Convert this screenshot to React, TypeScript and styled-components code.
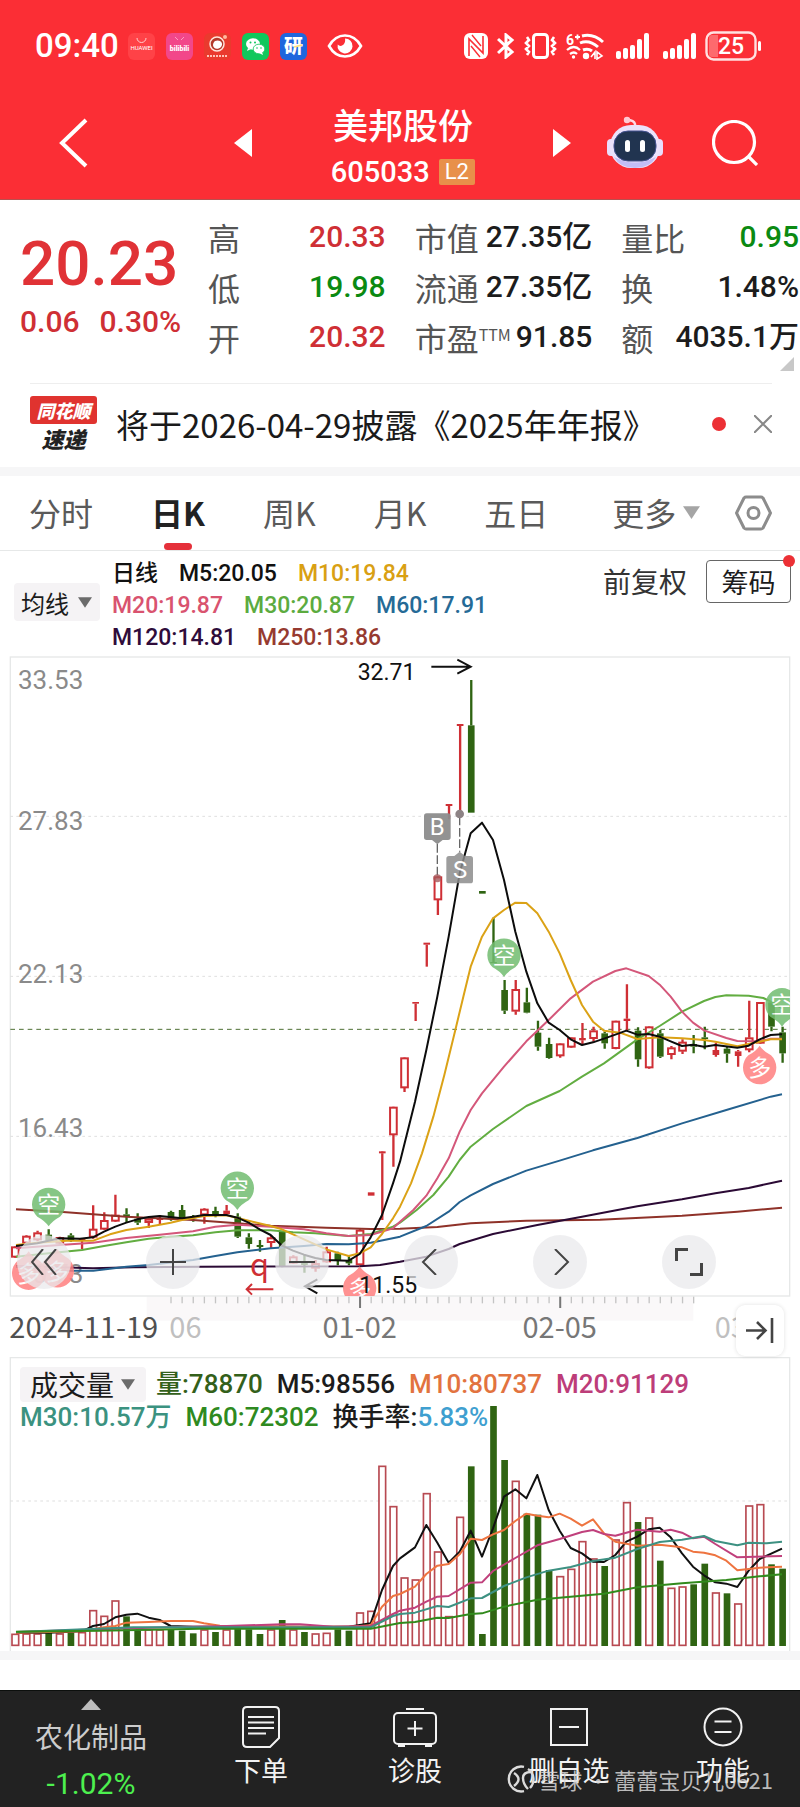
import React from "react";
import styled, { createGlobalStyle } from "styled-components";

const UI = `Roboto, "Noto Sans CJK SC", sans-serif`;
const CJK = `"Noto Sans CJK SC", sans-serif`;
const RED = "#cf2f35";
const GREEN = "#2f6412";

const GlobalStyle = createGlobalStyle`
  *, *::before, *::after { box-sizing: border-box; }
  body { margin: 0; background: #fff; font-family: ${UI}; color: #1c1c1c; }
  button, select { font: inherit; color: inherit; border: 0; background: none; padding: 0; margin: 0; }
  svg { display: block; }
  h1, p, dl, dd, dt { margin: 0; font-weight: inherit; }
`;

const Page = styled.main`
  width: 100%;
  overflow-x: hidden;
`;

/* ---------- header ---------- */

const Top = styled.header`
  background: #fb2e35;
  color: #fff;
  border-bottom: 1px solid #b8514f;
`;

const StatusBar = styled.div`
  display: flex;
  align-items: center;
  height: 92px;
  padding: 0 38px 0 35px;
`;

const Clock = styled.time`
  font-size: 33px;
  font-weight: 500;
  line-height: 40px;
`;

const IconRow = styled.div<{ $gap: number }>`
  display: flex;
  align-items: center;
  gap: ${(p) => p.$gap}px;
`;

const AppIcons = styled(IconRow)`
  margin-left: 9px;
`;

const EyeSlot = styled.div`
  margin-left: 20px;
`;

const SystemIcons = styled(IconRow)`
  margin-left: auto;
`;

const SignalPair = styled(IconRow)`
  margin-left: 3px;
`;

const TitleBar = styled.div`
  display: flex;
  align-items: center;
  height: 107px;
  padding: 0 42px 5px 59px;
`;

const TitleLeft = styled.div`
  flex: 269;
  display: flex;
  align-items: center;
  justify-content: space-between;
  padding-right: 79px;
`;

const TitleRight = styled.div`
  flex: 286;
  display: flex;
  align-items: center;
  gap: 36px;
  padding-left: 78px;
  & > :last-child { margin-left: auto; }
`;

const TitleWrap = styled.div`
  display: flex;
  flex-direction: column;
  align-items: center;
  width: 144px;
  padding-top: 10px;
`;

const StockName = styled.h1`
  font-family: ${CJK};
  font-size: 35px;
  font-weight: 500;
  line-height: 48px;
  white-space: nowrap;
`;

const CodeLine = styled.div`
  display: flex;
  align-items: center;
  gap: 9px;
  font-size: 29px;
  font-weight: 500;
  line-height: 48px;
`;

const Level = styled.span`
  padding: 0 6px;
  border-radius: 2px;
  background: #e8904a;
  font-size: 22px;
  font-weight: 400;
  line-height: 26px;
`;

const IconButton = styled.button`
  display: flex;
  align-items: center;
  justify-content: center;
`;

/* ---------- quote ---------- */

const Quote = styled.section`
  position: relative;
  display: grid;
  grid-template-columns: 159px 1fr 1fr 1fr;
  column-gap: 29px;
  padding: 12px 1px 21px 20px;
`;

const PriceBlock = styled.div`
  color: #e03236;
  padding-top: 14px;
  white-space: nowrap;
`;

const Price = styled.p`
  font-size: 62px;
  font-weight: 500;
  line-height: 76px;
`;

const Change = styled.p`
  display: flex;
  gap: 20px;
  font-size: 30px;
  font-weight: 500;
  line-height: 40px;
  color: ${RED};
`;

const Facts = styled.dl`
  display: grid;
  grid-auto-rows: 50px;
`;

const Fact = styled.div`
  display: flex;
  align-items: center;
  justify-content: space-between;
  white-space: nowrap;
`;

const FactName = styled.dt`
  font-family: ${CJK};
  font-size: 32px;
  line-height: 48px;
  color: #555;
  sup { font-size: 16px; line-height: 16px; vertical-align: 10px; }
`;

const FactValue = styled.dd<{ $tone?: "up" | "down" }>`
  font-size: 30px;
  font-weight: 500;
  line-height: 48px;
  color: ${(p) => (p.$tone === "up" ? RED : p.$tone === "down" ? "#0b8a12" : "#1c1c1c")};
`;

const Corner = styled.i`
  position: absolute;
  right: 6px;
  bottom: 12px;
  border: 7px solid transparent;
  border-right-color: #c8c8c8;
  border-bottom-color: #c8c8c8;
`;

/* ---------- news ---------- */

const News = styled.section`
  display: flex;
  align-items: center;
  height: 84px;
  margin: 0 28px 0 30px;
  padding-bottom: 4px;
  border-top: 1px solid #eee;
`;

const NewsLogo = styled.div`
  display: flex;
  flex-direction: column;
  align-items: center;
  width: 67px;
  font-family: ${CJK};
  font-weight: 900;
  font-style: italic;
`;

const LogoTop = styled.span`
  width: 67px;
  border-radius: 3px;
  background: #e0332f;
  color: #fff;
  font-size: 18px;
  line-height: 28px;
  text-align: center;
`;

const LogoBottom = styled.span`
  font-size: 22px;
  line-height: 28px;
  color: #222;
`;

const NewsLink = styled.a`
  flex: 1;
  margin-left: 19px;
  color: #1a1a1a;
  font-family: ${CJK};
  font-size: 33px;
  line-height: 48px;
  text-decoration: none;
  white-space: nowrap;
`;

const Dot = styled.i`
  width: 14px;
  height: 14px;
  border-radius: 50%;
  background: #ec3035;
`;

const CloseButton = styled(IconButton)`
  margin: 0 0 0 28px;
`;

const Band = styled.div`
  height: 9px;
  background: #f6f6f7;
`;

/* ---------- tabs ---------- */

const Tabs = styled.nav`
  display: flex;
  justify-content: space-between;
  height: 75px;
  padding: 0 28px 0 29px;
  border-bottom: 1px solid #e6e8e8;
`;

const TabList = styled.div`
  display: flex;
  gap: 58px;
`;

const Tab = styled.button<{ $active?: boolean }>`
  position: relative;
  display: flex;
  align-items: center;
  gap: 7px;
  padding-bottom: 2px;
  font-family: ${CJK};
  font-size: 32px;
  font-weight: ${(p) => (p.$active ? 700 : 400)};
  color: ${(p) => (p.$active ? "#222" : "#5a5a5a")};
  white-space: nowrap;
  &:last-child { margin-left: 6px; }
  &::after {
    content: ${(p) => (p.$active ? '""' : "none")};
    position: absolute;
    bottom: 0;
    left: 50%;
    width: 28px;
    height: 7px;
    margin-left: -14px;
    border-radius: 4px;
    background: #e5303a;
  }
`;

/* ---------- indicator legend ---------- */

const Legend = styled.div`
  display: flex;
  align-items: flex-start;
  height: 105px;
  padding: 7px 9px 0 14px;
`;

const Picker = styled.label<{ $large?: boolean }>`
  position: relative;
  display: flex;
  align-items: center;
  width: ${(p) => (p.$large ? 126 : 86)}px;
  height: ${(p) => (p.$large ? 35 : 38)}px;
  border-radius: 4px;
  background: #f5f3f5;
  font-family: ${CJK};
  font-size: ${(p) => (p.$large ? 28 : 24)}px;
  font-weight: 400;
  margin-top: ${(p) => (p.$large ? 0 : 25)}px;
  margin-right: ${(p) => (p.$large ? -4 : 0)}px;
  svg { position: absolute; right: ${(p) => (p.$large ? 11 : 8)}px; pointer-events: none; }
`;

const PickerSelect = styled.select<{ $pad: number }>`
  appearance: none;
  width: 100%;
  height: 100%;
  padding-left: ${(p) => p.$pad}px;
  outline: 0;
`;

const LegendRows = styled.div`
  flex: 1;
  margin-left: 12px;
`;

const LegendRow = styled.div<{ $gap: number; $size: number; $line: number }>`
  display: flex;
  align-items: center;
  gap: ${(p) => p.$gap}px;
  font-size: ${(p) => p.$size}px;
  font-weight: 500;
  line-height: ${(p) => p.$line}px;
  white-space: nowrap;
`;

const Tint = styled.span<{ $c: string }>`
  color: ${(p) => p.$c};
`;

const Adjust = styled.button`
  font-family: ${CJK};
  font-size: 28px;
  line-height: 42px;
  margin: 2px 19px 0 0;
  color: #333;
`;

const ChipsButton = styled.button`
  position: relative;
  width: 85px;
  height: 43px;
  margin-top: 2px;
  border: 1px solid #666;
  border-radius: 4px;
  font-family: ${CJK};
  font-size: 27px;
  line-height: 38px;
  i { position: absolute; top: -6px; right: -5px; width: 12px; height: 12px; }
`;

/* ---------- charts ---------- */

const ChartArea = styled.section`
  position: relative;
`;

const ChartSvg = styled.svg`
  width: 100%;
  height: auto;
`;

const Tools = styled.div`
  position: absolute;
  left: 17px;
  right: 84px;
  bottom: 68px;
  display: flex;
  justify-content: space-between;
`;

const Tool = styled.button`
  width: 54px;
  height: 54px;
  border-radius: 50%;
  background: rgba(234, 234, 236, 0.75);
  display: flex;
  align-items: center;
  justify-content: center;
`;

const LatestButton = styled.button`
  position: absolute;
  right: 16px;
  bottom: 1px;
  width: 48px;
  height: 51px;
  border-radius: 9px;
  background: #fff;
  box-shadow: 0 0 4px rgba(0, 0, 0, 0.12);
  display: flex;
  align-items: center;
  justify-content: center;
`;

const VolumeArea = styled.section`
  display: grid;
  & > * { grid-area: 1 / 1; }
`;

const VolumeLegend = styled.div`
  z-index: 1;
  padding: 10px 20px 0;
`;

/* ---------- bottom bar ---------- */

const Spacer = styled.div`
  height: 30px;
`;

const BottomBar = styled.nav`
  position: relative;
  display: grid;
  grid-template-columns: 184fr repeat(4, 154fr);
  height: 118px;
  background: #222;
  border-top: 1px solid #0c0f0d;
  color: #f2f2f2;
`;

const Sector = styled.a`
  display: flex;
  flex-direction: column;
  align-items: center;
  padding: 8px 24px 0 0;
  margin-left: 22px;
  color: #ccc;
  font-family: ${CJK};
  font-size: 28px;
  line-height: 38px;
  text-decoration: none;
  & > svg { margin-bottom: 7px; }
`;

const SectorMove = styled.span`
  margin-top: 10px;
  color: #4df04f;
  font-family: ${UI};
  font-size: 30px;
`;

const Action = styled.button`
  display: flex;
  flex-direction: column;
  align-items: center;
  gap: 4px;
  padding-top: 15px;
  font-family: ${CJK};
  font-size: 27px;
  line-height: 36px;
`;

const Watermark = styled.div`
  position: absolute;
  right: 27px;
  bottom: 12px;
  display: flex;
  align-items: center;
  gap: 3px;
  color: rgba(215, 215, 215, 0.85);
  font-family: ${CJK};
  font-size: 22px;
  line-height: 34px;
  pointer-events: none;
`;

/* ---------- chart data (three units to a pixel) ---------- */

type P = [number, number];
const STEP = 33.36;
const slot = (i: number) => 46 + STEP * i;
const at = (dx: number, dy: number, pts: P[]): P[] => pts.map(([x, y]) => [x + dx, y + dy]);
const path = (pts: P[]) => pts.map(([x, y]) => `${x},${y}`).join(" ");

/* high, body top, body bottom, low, direction, solid */
type Candle = [number, number, number, number, "r" | "g", boolean?];
const shift = (dy: number, c: Candle[]): Candle[] =>
  c.map(([h, a, b, l, d, s]) => [h + dy, a + dy, b + dy, l + dy, d, s]);

const candles: Candle[] = [
  ...shift(1350, [
    [738, 740, 772, 774, "r"], [706, 708, 730, 732, "r"], [692, 698, 720, 724, "r"],
    [688, 704, 722, 724, "g"], [710, 712, 730, 732, "r"], [700, 706, 720, 725, "g"],
    [716, 717, 722, 748, "r", true], [616, 687, 712, 716, "r"], [637, 661, 688, 690, "r"],
    [584, 645, 664, 666, "r"], [625, 643, 649, 668, "g"], [640, 656, 668, 675, "g"],
    [655, 657, 668, 684, "r"], [645, 655, 660, 672, "r", true], [632, 636, 658, 662, "g"],
    [615, 630, 658, 660, "g"], [645, 650, 655, 665, "g"], [625, 627, 645, 671, "r"],
    [620, 633, 646, 652, "g"], [615, 632, 642, 644, "r", true], [640, 650, 710, 714, "g"],
    [700, 712, 732, 746, "g"], [720, 735, 741, 755, "g"], [705, 713, 728, 745, "r"],
    [693, 695, 800, 802, "g"], [766, 770, 790, 792, "r"], [765, 785, 795, 818, "g"],
    [780, 790, 805, 815, "r"], [740, 755, 786, 788, "r"], [755, 760, 780, 796, "g"],
    [768, 780, 790, 796, "g"], [688, 690, 795, 796, "r"], [577, 577, 587, 587, "r", true],
    [455, 454, 460, 660, "r", true], [320, 321, 405, 500, "r"],
  ]),
  ...shift(1200, [[322, 323, 414, 426, "r"], [156, 156, 161, 213, "r", true]]),
  [1178, 1178, 1184, 1250, "r", true],
  [978, 980, 1050, 1095, "r"],
  [762, 762, 768, 808, "r", true],
  [522, 522, 528, 790, "r", true],
  [390, 526, 788, 788, "g"],
  [1023, 1023, 1031, 1031, "g"],
  [1103, 1236, 1240, 1240, "g"],
  ...shift(1200, [
    [90, 120, 182, 192, "g"], [90, 118, 184, 194, "r"], [113, 157, 188, 190, "g"],
    [212, 248, 290, 302, "g"], [263, 282, 324, 326, "g"], [280, 281, 318, 323, "r"],
    [262, 263, 292, 294, "r"], [219, 264, 271, 285, "r", true], [230, 242, 266, 275, "r"],
    [245, 250, 280, 296, "g"], [212, 213, 296, 298, "r"], [103, 206, 213, 244, "r", true],
    [232, 242, 328, 350, "g"], [229, 230, 354, 356, "r"], [240, 250, 320, 324, "g"],
    [288, 293, 314, 328, "r"], [268, 276, 304, 312, "r"], [255, 282, 290, 310, "g"],
    [230, 262, 267, 298, "g"], [278, 300, 315, 320, "r", true], [290, 296, 311, 338, "g"],
    [300, 304, 318, 350, "r", true], [152, 263, 300, 307, "r"], [156, 157, 280, 282, "r"],
    [156, 157, 230, 244, "g"], [230, 247, 310, 338, "g"],
  ]),
];

const averages: { c: string; pts: P[] }[] = [
  { c: "#8f3229", pts: [
    ...at(0, 1350, [[48, 628], [179, 635], [379, 650], [579, 660], [712, 670], [812, 677], [979, 683], [1112, 687]]),
    ...at(1200, 1200, [[0, 836], [112, 831], [212, 820], [379, 812], [600, 809], [846, 797], [1012, 785], [1112, 776], [1146, 773]])] },
  { c: "#2b0a35", pts: [
    ...at(0, 1350, [[48, 798], [279, 805], [400, 802], [600, 800], [1079, 799], [1140, 795]]),
    ...at(1200, 1200, [[0, 935], [79, 920], [146, 897], [179, 882], [279, 852], [412, 825], [546, 800], [712, 769], [846, 748], [946, 730], [1046, 714], [1146, 692]])] },
  { c: "#24618f", pts: [
    ...at(0, 1350, [[48, 800], [200, 812], [280, 812], [379, 800], [446, 795], [579, 780], [646, 768], [712, 757], [812, 745], [912, 738], [979, 732], [1046, 733], [1112, 728]]),
    ...at(1200, 1200, [[0, 860], [79, 828], [146, 785], [179, 756], [212, 736], [279, 702], [379, 662], [479, 632], [579, 601], [712, 564], [846, 520], [979, 480], [1112, 440], [1146, 433]])] },
  { c: "#62ad41", pts: [
    ...at(0, 1350, [[48, 770], [146, 760], [246, 750], [312, 738], [379, 727], [446, 716], [512, 710], [579, 706], [646, 697], [712, 691], [812, 691], [879, 697], [946, 700], [1046, 708], [1112, 702], [1179, 680]]),
    ...at(1200, 1200, [[0, 818], [50, 780], [100, 735], [146, 680], [179, 630], [212, 590], [279, 537], [379, 468], [479, 423], [546, 380], [612, 340], [712, 268], [779, 228], [846, 185], [912, 153], [946, 141], [979, 136], [1046, 137], [1090, 144], [1112, 155], [1146, 175]])] },
  { c: "#d4577a", pts: [
    ...at(0, 1350, [[48, 745], [179, 735], [279, 728], [379, 714], [479, 704], [579, 694], [646, 680], [712, 674], [812, 680], [912, 688], [979, 700], [1046, 708], [1112, 705], [1179, 685]]),
    ...at(1200, 1200, [[0, 815], [40, 780], [79, 737], [112, 685], [146, 625], [179, 545], [212, 480], [246, 430], [312, 350], [379, 274], [446, 210], [512, 145], [579, 95], [646, 63], [679, 55], [746, 78], [779, 104], [812, 140], [846, 185], [879, 218], [912, 241], [979, 264], [1012, 273], [1079, 274], [1112, 266], [1146, 266]])] },
  { c: "#dba216", pts: [
    ...at(0, 1350, [[48, 735], [112, 728], [200, 722], [280, 722], [330, 703], [379, 690], [446, 680], [512, 668], [546, 660], [612, 648], [679, 646], [746, 662], [812, 678], [846, 688], [912, 718], [979, 748], [1046, 768], [1079, 760], [1112, 742], [1146, 702], [1179, 655]]),
    ...at(1200, 1200, [[0, 770], [33, 700], [66, 610], [100, 500], [133, 375], [166, 240], [190, 140], [212, 50], [246, -40], [279, -95], [312, -120], [346, -142], [379, -141], [412, -110], [446, -55], [479, 10], [512, 90], [546, 165], [579, 215], [612, 242], [660, 248], [712, 267], [779, 262], [846, 265], [912, 270], [946, 275], [1012, 289], [1079, 275], [1112, 268], [1146, 268]])] },
  { c: "#0c0c0c", pts: [
    ...at(0, 1350, [[48, 738], [112, 730], [179, 715], [240, 716], [279, 712], [312, 695], [346, 680], [379, 668], [412, 658], [446, 651], [479, 648], [546, 655], [579, 650], [612, 645], [679, 645], [712, 653], [746, 668], [779, 688], [812, 705], [846, 737], [879, 752], [912, 764], [946, 774], [979, 780], [1046, 782], [1079, 762], [1112, 712], [1146, 645], [1179, 550]]),
    ...at(1200, 1200, [[0, 635], [45, 455], [79, 300], [112, 140], [146, -40], [179, -230], [212, -350], [246, -382], [279, -330], [312, -210], [346, -55], [379, 65], [412, 160], [446, 218], [479, 240], [512, 268], [546, 285], [579, 277], [612, 266], [646, 254], [679, 242], [712, 254], [746, 252], [779, 260], [812, 274], [846, 288], [879, 284], [912, 290], [946, 285], [1012, 293], [1046, 287], [1079, 268], [1112, 255], [1146, 253]])] },
];

const volumes: [number, "r" | "g"][] = (
  "881r 880r 880r 875g 880r 878g 876r 810r 827r 781r 829g 872g 868r 868r 868g 872g 880g 868r 876g 868r 862g 868g 882g 868r 840g 868r 876g 880r 878r 868g 872g 817r 812r 377r 498r " +
  "712r 718r 459r 634r 828r 530r 379g 882g 198g 360g 422r 521g 524g 690g 708r 686r 603r 655r 678g 598r 486r 546g 532r 662g 743r 739r 733g 671g 757r 760g 790r 496r 492r 673g 686g"
).split(" ").map((v) => [parseInt(v, 10), v.endsWith("r") ? "r" : "g"]);

const volumeAverages: { c: string; pts: P[] }[] = [
  { c: "#111", pts: [
    [48, 878], [146, 878], [246, 874], [279, 858], [312, 852], [346, 832], [379, 824], [412, 821], [446, 833], [479, 840], [512, 858], [579, 860], [1046, 860], [1079, 855], [1112, 850], [1146, 750], [1179, 678],
    ...at(1200, 0, [[0, 655], [45, 622], [79, 555], [112, 608], [146, 668], [179, 635], [212, 572], [246, 650], [279, 565], [312, 470], [346, 448], [379, 475], [412, 405], [446, 510], [479, 572], [512, 624], [546, 640], [579, 665], [612, 666], [646, 645], [679, 605], [712, 590], [746, 568], [779, 563], [812, 592], [846, 640], [879, 680], [912, 706], [946, 727], [979, 731], [1012, 741], [1046, 692], [1079, 657], [1146, 626]])] },
  { c: "#ee7440", pts: [
    [48, 878], [246, 874], [312, 862], [346, 858], [379, 848], [446, 846], [512, 843], [579, 843], [612, 850], [660, 857], [900, 860], [1046, 860], [1112, 856], [1146, 800], [1179, 768],
    ...at(1200, 0, [[0, 762], [45, 740], [79, 702], [112, 677], [146, 672], [179, 643], [212, 596], [246, 600], [279, 583], [312, 570], [346, 543], [379, 521], [412, 527], [446, 532], [479, 521], [512, 536], [546, 557], [579, 538], [612, 580], [646, 605], [712, 617], [779, 614], [846, 622], [879, 635], [912, 638], [946, 646], [979, 662], [1012, 691], [1079, 683], [1146, 680]])] },
  { c: "#c0407c", pts: [
    [48, 876], [300, 868], [500, 862], [680, 858], [846, 853], [900, 853], [1000, 860], [1112, 858], [1179, 822],
    ...at(1200, 0, [[0, 812], [45, 803], [79, 785], [112, 770], [146, 768], [212, 728], [246, 727], [279, 693], [346, 654], [412, 616], [479, 597], [546, 576], [579, 570], [612, 582], [646, 587], [712, 569], [779, 575], [812, 569], [846, 578], [879, 595], [912, 590], [946, 612], [1012, 652], [1146, 648]])] },
  { c: "#3d9182", pts: [
    [48, 876], [400, 862], [700, 862], [1112, 862], [1179, 828],
    ...at(1200, 0, [[0, 822], [45, 818], [112, 798], [146, 801], [212, 775], [246, 774], [312, 738], [379, 712], [446, 692], [512, 681], [579, 663], [646, 653], [712, 627], [779, 606], [846, 599], [912, 588], [946, 603], [1012, 616], [1046, 608], [1100, 610], [1146, 605]])] },
  { c: "#318a1c", pts: [
    [48, 875], [300, 872], [600, 866], [1112, 866],
    ...at(1200, 0, [[0, 849], [45, 846], [112, 833], [146, 834], [212, 822], [246, 820], [312, 800], [412, 779], [512, 770], [612, 761], [712, 742], [846, 730], [979, 720], [1079, 709], [1146, 703]])] },
];

function Pin({ x, y, kind }: { x: number; y: number; kind: "空" | "多" }) {
  const down = kind === "空";
  const s = down ? 1 : -1;
  return (
    <g opacity="0.85">
      <path
        d={`M${x - 34} ${y + 37 * s}A50 50 0 1 ${down ? 1 : 0} ${x + 34} ${y + 37 * s}Q${x + 10} ${y + 50 * s} ${x} ${y + 66 * s}Q${x - 10} ${y + 50 * s} ${x - 34} ${y + 37 * s}Z`}
        fill={down ? "#72bd70" : "#ff7f7f"}
      />
      <text x={x} y={y + 26} fontSize="69" fill="#fff" textAnchor="middle" fontFamily={CJK}>{kind}</text>
    </g>
  );
}

function PriceChart() {
  return (
    <ChartSvg viewBox="0 318 2400 2103" fontFamily={UI} role="img" aria-label="日K线图">
      <defs>
        <clipPath id="frame"><rect x="30" y="321" width="2340" height="1917" /></clipPath>
      </defs>
      <rect x="440" y="2240" width="1640" height="72" fill="#faf8f9" />
      <rect x="31" y="321" width="2338" height="1917" fill="none" stroke="#e6e8e8" strokeWidth="4" />
      {[799, 1279, 1759].map((y) => (
        <line key={y} x1="31" x2="2369" y1={y} y2={y} stroke="#dfdfdf" strokeWidth="3" strokeDasharray="8 10" />
      ))}
      <line x1="31" x2="2369" y1="1438" y2="1438" stroke="#4f7034" strokeWidth="3" strokeDasharray="14 12" />
      <g fontSize="78" fill="#8a8a8a">
        <text x="54" y="417">33.53</text>
        <text x="54" y="840">27.83</text>
        <text x="54" y="1299">22.13</text>
        <text x="54" y="1760">16.43</text>
        <text x="54" y="2200">10.73</text>
      </g>
      <g clipPath="url(#frame)">
        {candles.map(([h, a, b, l, d, solid], i) => {
          const x = slot(i);
          const c = d === "r" ? RED : GREEN;
          const hollow = d === "r" && !solid;
          return (
            <g key={i}>
              <path d={`M${x} ${h}V${a}M${x} ${b}V${l}`} stroke={c} strokeWidth="7" />
              {hollow ? (
                <rect x={x - 10} y={a + 2} width="20" height={Math.max(b - a - 4, 4)} fill="#fff" stroke={c} strokeWidth="6" />
              ) : (
                <rect x={x - 10} y={a} width="20" height={b - a} fill={c} />
              )}
            </g>
          );
        })}
        {averages.map((m) => (
          <polyline key={m.c} points={path(m.pts)} fill="none" stroke={m.c} strokeWidth="6" strokeLinejoin="round" />
        ))}
        <Pin x={146} y={1963} kind="空" />
        <Pin x={712} y={1914} kind="空" />
        <Pin x={1512} y={1215} kind="空" />
        <Pin x={2346} y={1364} kind="空" />
        <Pin x={2279} y={1553} kind="多" />
        <Pin x={1079} y={2215} kind="多" />
        <Pin x={86} y={2170} kind="多" />
        <Pin x={172} y={2163} kind="多" />
      </g>
      <path d="M1312 882V980M1379 800V905" stroke="#666" strokeWidth="4" strokeDasharray="26 8" />
      <circle cx="1379" cy="792" r="13" fill="#8d8385" />
      <circle cx="1312" cy="985" r="12" fill="#a65a5c" opacity="0.8" />
      <path d="M1280 790h64a8 8 0 0 1 8 8v64a8 8 0 0 1-8 8h-16l-16 13-16-13h-16a8 8 0 0 1-8-8v-64a8 8 0 0 1 8-8z" fill="#8c8c8c" opacity="0.95" />
      <path d="M1347 918h16l16-13 16 13h16a8 8 0 0 1 8 8v66a8 8 0 0 1-8 8h-64a8 8 0 0 1-8-8v-66a8 8 0 0 1 8-8z" fill="#8c8c8c" opacity="0.85" />
      <g fontSize="72" fill="#fff" textAnchor="middle">
        <text x="1312" y="855">B</text>
        <text x="1380" y="984">S</text>
      </g>
      <g fontSize="69" fill="#111">
        <text x="1073" y="389">32.71</text>
        <text x="1078" y="2230">11.55</text>
      </g>
      <path d="M1294 350H1412M1372 329L1412 350L1372 371M1030 2209H915M952 2188L915 2209L952 2230" fill="none" stroke="#111" strokeWidth="6" />
      <text x="750" y="2177" fontSize="92" fill={RED} fontFamily={CJK}>q</text>
      <path d="M820 2218H740M756 2202L740 2218L756 2234" fill="none" stroke={RED} strokeWidth="6" />
      {Array.from({ length: 48 }, (_, k) => k + 14).map((i) => {
        const major = i === 31 || i === 49;
        return (
          <line key={i} x1={slot(i)} x2={slot(i)} y1="2240" y2={major ? 2274 : 2260}
            stroke={major ? "#777" : "#c4c4c4"} strokeWidth={major ? 6 : 4} />
        );
      })}
      <g fontSize="87" fontFamily={CJK} fill="#777">
        <text x="28" y="2364" fill="#505050">2024-11-19</text>
        <text x="508" y="2364" fill="#c0bfc0">06</text>
        <text x="1079" y="2364" textAnchor="middle">01-02</text>
        <text x="1679" y="2364" textAnchor="middle">02-05</text>
        <text x="2144" y="2364" fill="#c0bfc0">03</text>
      </g>
    </ChartSvg>
  );
}

function VolumeChart() {
  return (
    <ChartSvg viewBox="0 51 2400 882" role="img" aria-label="成交量图">
      <path d="M31 933V53H2369V933" fill="none" stroke="#e6e8e8" strokeWidth="4" />
      <line x1="31" x2="2369" y1="483" y2="483" stroke="#dfdfdf" strokeWidth="3" strokeDasharray="8 10" />
      {volumes.map(([top, d], i) =>
        d === "r" ? (
          <rect key={i} x={slot(i) - 10} y={top + 2} width="20" height={914 - top} fill="#fff" stroke="#b84a52" strokeWidth="5" />
        ) : (
          <rect key={i} x={slot(i) - 10} y={top} width="20" height={918 - top} fill={GREEN} />
        )
      )}
      {volumeAverages.map((m) => (
        <polyline key={m.c} points={path(m.pts)} fill="none" stroke={m.c} strokeWidth="6" strokeLinejoin="round" />
      ))}
    </ChartSvg>
  );
}

/* ---------- icons ---------- */

const Caret = ({ w = 14, c = "#6b6b6b" }: { w?: number; c?: string }) => (
  <svg width={w} height={Math.round(w * 0.75)} viewBox="0 0 16 12"><path d="M0 0H16L8 12Z" fill={c} /></svg>
);

const HuaweiIcon = () => (
  <svg width="27" height="27" viewBox="0 0 27 27">
    <rect width="27" height="27" rx="6" fill="#ff4247" />
    <path d="M9 5a4.500 4.500 0 0 0 9 0" fill="none" stroke="#ffd0d0" />
    <text x="13.500" y="17" fontSize="6" textAnchor="middle" fill="#fff" fontFamily={UI}>HUAWEI</text>
  </svg>
);

const BiliIcon = () => (
  <svg width="27" height="27" viewBox="0 0 27 27">
    <rect width="27" height="27" rx="6" fill="#f2478a" />
    <path d="M9 4l3 3M18 4l-3 3" stroke="#ff9cc0" />
    <text x="13.500" y="18" fontSize="7" fontWeight="900" textAnchor="middle" fill="#fff" fontFamily={UI}>bilibili</text>
  </svg>
);

const BankIcon = () => (
  <svg width="27" height="27" viewBox="0 0 27 27">
    <rect width="27" height="27" rx="6" fill="#ea3a2e" />
    <circle cx="13" cy="11" r="7" fill="#b33a2c" stroke="#ffe6dc" strokeWidth="1.500" />
    <path d="M11 8c5-2 9 2 6 6-3 3-8 2-8-2 0-2 1-3 2-4z" fill="#fff" />
    <circle cx="21" cy="4" r="2" fill="#ffb9a0" />
    <path d="M3 23H24" stroke="#ffc3b8" strokeWidth="2" strokeDasharray="2 1" />
  </svg>
);

const WeChatIcon = () => (
  <svg width="27" height="27" viewBox="0 0 27 27">
    <rect width="27" height="27" rx="6" fill="#10c75c" />
    <ellipse cx="11" cy="11" rx="7" ry="5.800" fill="#fff" />
    <path d="M6 15l-1 3 4-2z" fill="#fff" />
    <ellipse cx="17" cy="16" rx="5.800" ry="4.800" fill="#fff" stroke="#10c75c" strokeWidth="0.800" />
    <path d="M20 19l1 3-4-2z" fill="#fff" />
    <g fill="#10c75c"><circle cx="8.500" cy="9.500" r="1" /><circle cx="13" cy="9.500" r="1" /><circle cx="15" cy="15" r="0.800" /><circle cx="19" cy="15" r="0.800" /></g>
  </svg>
);

const ResearchIcon = () => (
  <svg width="27" height="27" viewBox="0 0 27 27">
    <rect width="27" height="27" rx="6" fill="#1f66dd" />
    <text x="13.500" y="20" fontSize="19" fontWeight="900" textAnchor="middle" fill="#fff" fontFamily={CJK}>研</text>
    <path d="M14 14l8-2" stroke="#ffe27a" strokeWidth="1.500" />
  </svg>
);

const EyeIcon = () => (
  <svg width="36" height="26" viewBox="0 0 36 26" fill="none" stroke="#fff" strokeWidth="2.600">
    <path d="M2 13C10-1 26-1 34 13C26 27 10 27 2 13Z" />
    <path d="M18 5.500a7.500 7.500 0 1 1-7.300 6c3 3.500 8.500 0 7.300-6z" fill="#fff" stroke="none" />
  </svg>
);

const NfcIcon = () => (
  <svg width="24" height="26" viewBox="0 0 24 26">
    <rect width="24" height="26" rx="6" fill="#fff" />
    <path d="M5 23V6L19 20V3" fill="none" stroke="#fb2e35" strokeWidth="1.600" />
    <path d="M8 2L17 13M7 13L16 24" fill="none" stroke="#fb2e35" strokeWidth="1.400" />
  </svg>
);

const BluetoothIcon = () => (
  <svg width="18" height="26" viewBox="0 0 18 26" fill="none" stroke="#fff" strokeWidth="3">
    <path d="M1 6L15 19L9 24V2L15 7L1 20" />
  </svg>
);

const VibrateIcon = () => (
  <svg width="33" height="26" viewBox="0 0 33 26" fill="none" stroke="#fff" strokeWidth="3">
    <rect x="9.500" y="1.500" width="14" height="23" rx="3" />
    <path d="M3 4l2 3-3 3 3 3-3 3 3 3-2 3M30 4l-2 3 3 3-3 3 3 3-3 3 2 3" strokeWidth="2.600" />
  </svg>
);

const WifiIcon = () => (
  <svg width="38" height="28" viewBox="0 0 38 28" fill="none" stroke="#fff" strokeWidth="3">
    <text x="0" y="13" fontSize="14" fontWeight="700" fill="#fff" stroke="none" fontFamily={UI}>6</text>
    <path d="M9 5h5M11.500 2.500v5" strokeWidth="1.800" />
    <path d="M16 4q11-3 21 6M14 11q9-4 18 4M17 18q5-2 9 1" />
    <path d="M1 18q7-6 13 0M4 22q4-3 7 0" strokeWidth="2.200" />
    <circle cx="7.500" cy="25" r="1.700" fill="#fff" stroke="none" />
    <circle cx="20" cy="24" r="3.200" fill="#fff" stroke="none" />
    <path d="M25 25l4-5v7M31 20v7l5-3z" strokeWidth="1.600" />
  </svg>
);

const SignalIcon = () => (
  <svg width="33" height="28" viewBox="0 0 33 28" fill="#fff">
    {[8, 11, 14, 20, 26].map((h, i) => (
      <rect key={h} x={i * 7} y={27 - h} width="5" height={h} rx="2" />
    ))}
  </svg>
);

const BatteryIcon = () => (
  <svg width="57" height="30" viewBox="0 0 57 30">
    <rect x="1.500" y="1.500" width="49" height="27" rx="7" fill="none" stroke="#ffe1e1" strokeWidth="2.400" />
    <path d="M7 4h6v22H7q-3 0-3-3V7q0-3 3-3z" fill="#fd6a6e" />
    <rect x="53" y="10" width="3" height="10" rx="1.500" fill="#fff" />
    <text x="26" y="23" fontSize="23" fontWeight="500" textAnchor="middle" fill="#fff" fontFamily={UI}>25</text>
  </svg>
);

const RobotIcon = () => (
  <svg width="56" height="54" viewBox="0 0 56 54">
    <path d="M28 11V8q-1-4-8-4" fill="none" stroke="#ffd9e6" strokeWidth="2.500" />
    <circle cx="20" cy="4" r="3.200" fill="#ffc9d4" />
    <rect x="0" y="23" width="9" height="17" rx="4" fill="#e9defc" />
    <rect x="47" y="23" width="9" height="17" rx="4" fill="#e9defc" />
    <rect x="3" y="9" width="50" height="43" rx="21" fill="#ebe2fb" />
    <path d="M7 41q21 11 42 0q-6 11-21 11T7 41z" fill="#c3bdf6" />
    <rect x="7" y="15" width="42" height="30" rx="14" fill="#213450" stroke="#42518f" />
    <rect x="18" y="24" width="5" height="12" rx="2.500" fill="#fff" />
    <rect x="33" y="24" width="5" height="12" rx="2.500" fill="#fff" />
  </svg>
);

export default function App() {
  return (
    <Page>
      <GlobalStyle />
      <Top>
        <StatusBar>
          <Clock>09:40</Clock>
          <AppIcons $gap={11}>
            <HuaweiIcon /><BiliIcon /><BankIcon /><WeChatIcon /><ResearchIcon />
          </AppIcons>
          <EyeSlot><EyeIcon /></EyeSlot>
          <SystemIcons $gap={9}>
            <NfcIcon /><BluetoothIcon /><VibrateIcon /><WifiIcon />
            <SignalPair $gap={14}><SignalIcon /><SignalIcon /></SignalPair>
            <BatteryIcon />
          </SystemIcons>
        </StatusBar>
        <TitleBar>
          <TitleLeft>
            <IconButton aria-label="返回">
              <svg width="29" height="50" viewBox="0 0 29 50"><path d="M27 2L3 25L27 48" fill="none" stroke="#fff" strokeWidth="4" /></svg>
            </IconButton>
            <IconButton aria-label="上一只">
              <svg width="18" height="28" viewBox="0 0 18 28"><path d="M18 0V28L0 14Z" fill="#fff" /></svg>
            </IconButton>
          </TitleLeft>
          <TitleWrap>
            <StockName>美邦股份</StockName>
            <CodeLine>605033<Level>L2</Level></CodeLine>
          </TitleWrap>
          <TitleRight>
            <IconButton aria-label="下一只">
              <svg width="18" height="28" viewBox="0 0 18 28"><path d="M0 0V28L18 14Z" fill="#fff" /></svg>
            </IconButton>
            <IconButton aria-label="智能助手"><RobotIcon /></IconButton>
            <IconButton aria-label="搜索">
              <svg width="46" height="46" viewBox="0 0 46 46" fill="none" stroke="#fff" strokeWidth="3.200">
                <circle cx="22" cy="22" r="20.500" /><path d="M36 36L45 45" />
              </svg>
            </IconButton>
          </TitleRight>
        </TitleBar>
      </Top>

      <Quote>
        <PriceBlock>
          <Price>20.23</Price>
          <Change><span>0.06</span><span>0.30%</span></Change>
        </PriceBlock>
        <Facts>
          <Fact><FactName>高</FactName><FactValue $tone="up">20.33</FactValue></Fact>
          <Fact><FactName>低</FactName><FactValue $tone="down">19.98</FactValue></Fact>
          <Fact><FactName>开</FactName><FactValue $tone="up">20.32</FactValue></Fact>
        </Facts>
        <Facts>
          <Fact><FactName>市值</FactName><FactValue>27.35亿</FactValue></Fact>
          <Fact><FactName>流通</FactName><FactValue>27.35亿</FactValue></Fact>
          <Fact><FactName>市盈<sup>TTM</sup></FactName><FactValue>91.85</FactValue></Fact>
        </Facts>
        <Facts>
          <Fact><FactName>量比</FactName><FactValue $tone="down">0.95</FactValue></Fact>
          <Fact><FactName>换</FactName><FactValue>1.48%</FactValue></Fact>
          <Fact><FactName>额</FactName><FactValue>4035.1万</FactValue></Fact>
        </Facts>
        <Corner />
      </Quote>

      <News>
        <NewsLogo><LogoTop>同花顺</LogoTop><LogoBottom>速递</LogoBottom></NewsLogo>
        <NewsLink href="#news">将于2026-04-29披露《2025年年报》</NewsLink>
        <Dot />
        <CloseButton aria-label="关闭">
          <svg width="18" height="18" viewBox="0 0 18 18"><path d="M0 0L18 18M18 0L0 18" stroke="#888" strokeWidth="2" /></svg>
        </CloseButton>
      </News>
      <Band />

      <Tabs>
        <TabList>
          <Tab>分时</Tab>
          <Tab $active>日K</Tab>
          <Tab>周K</Tab>
          <Tab>月K</Tab>
          <Tab>五日</Tab>
          <Tab aria-haspopup="menu">更多<Caret w={17} c="#a5a5a5" /></Tab>
        </TabList>
        <IconButton aria-label="设置">
          <svg width="37" height="36" viewBox="0 0 37 36" fill="none" stroke="#8c8c8c" strokeWidth="3">
            <path d="M11 2H26Q27 2 28 3L35 17Q36 18 35 19L28 33Q27 34 26 34H11Q10 34 9 33L2 19Q1 18 2 17L9 3Q10 2 11 2Z" />
            <circle cx="18.500" cy="18" r="5.500" />
          </svg>
        </IconButton>
      </Tabs>

      <Legend>
        <Picker>
          <PickerSelect $pad={7} aria-label="指标"><option>均线</option></PickerSelect>
          <Caret />
        </Picker>
        <LegendRows>
          <LegendRow $gap={21} $size={23} $line={32}>
            <Tint $c="#111">日线</Tint><Tint $c="#111">M5:20.05</Tint><Tint $c="#d9a013">M10:19.84</Tint>
          </LegendRow>
          <LegendRow $gap={21} $size={23} $line={32}>
            <Tint $c="#d9536f">M20:19.87</Tint><Tint $c="#5cab3f">M30:20.87</Tint><Tint $c="#256a96">M60:17.91</Tint>
          </LegendRow>
          <LegendRow $gap={21} $size={23} $line={32}>
            <Tint $c="#2f0c3b">M120:14.81</Tint><Tint $c="#963a30">M250:13.86</Tint>
          </LegendRow>
        </LegendRows>
        <Adjust>前复权</Adjust>
        <ChipsButton>筹码<Dot /></ChipsButton>
      </Legend>

      <ChartArea>
        <PriceChart />
        <Tools>
          <Tool aria-label="快退">
            <svg width="26" height="26" viewBox="0 0 26 26" fill="none" stroke="#444" strokeWidth="2"><path d="M12 0L1 13L12 26M25 0L14 13L25 26" /></svg>
          </Tool>
          <Tool aria-label="放大">
            <svg width="26" height="26" viewBox="0 0 26 26" stroke="#444" strokeWidth="2"><path d="M0 13H26M13 0V26" /></svg>
          </Tool>
          <Tool aria-label="缩小">
            <svg width="26" height="26" viewBox="0 0 26 26" stroke="#444" strokeWidth="2"><path d="M0 13H26" /></svg>
          </Tool>
          <Tool aria-label="向左">
            <svg width="26" height="26" viewBox="0 0 26 26" fill="none" stroke="#444" strokeWidth="2"><path d="M18 0L5 13L18 26" /></svg>
          </Tool>
          <Tool aria-label="向右">
            <svg width="26" height="26" viewBox="0 0 26 26" fill="none" stroke="#444" strokeWidth="2"><path d="M8 0L21 13L8 26" /></svg>
          </Tool>
          <Tool aria-label="全屏">
            <svg width="28" height="28" viewBox="0 0 28 28" fill="none" stroke="#444" strokeWidth="3"><path d="M1.500 13V1.500H13M26.500 15V26.500H15" /></svg>
          </Tool>
        </Tools>
        <LatestButton aria-label="最新">
          <svg width="28" height="25" viewBox="0 0 28 25" fill="none" stroke="#444" strokeWidth="2.600"><path d="M0 12.500H19M11 4L19.500 12.500L11 21M26 0V25" /></svg>
        </LatestButton>
      </ChartArea>

      <VolumeArea>
        <VolumeLegend>
          <LegendRow $gap={14} $size={26} $line={35}>
            <Picker $large>
              <PickerSelect $pad={10} aria-label="副图指标"><option>成交量</option></PickerSelect>
              <Caret />
            </Picker>
            <Tint $c="#33601a">量:78870</Tint>
            <Tint $c="#1c1c1c">M5:98556</Tint>
            <Tint $c="#e2733f">M10:80737</Tint>
            <Tint $c="#bd3d79">M20:91129</Tint>
          </LegendRow>
          <LegendRow $gap={14} $size={26} $line={30}>
            <Tint $c="#3b9280">M30:10.57万</Tint>
            <Tint $c="#2e8a20">M60:72302</Tint>
            <Tint $c="#1c1c1c">换手率:<Tint $c="#3f9fd0">5.83%</Tint></Tint>
          </LegendRow>
        </VolumeLegend>
        <VolumeChart />
      </VolumeArea>
      <Band />
      <Spacer />

      <BottomBar>
        <Sector href="#sector">
          <svg width="20" height="11" viewBox="0 0 20 11"><path d="M10 0L20 11H0Z" fill="#bdbdbd" /></svg>
          农化制品
          <SectorMove>-1.02%</SectorMove>
        </Sector>
        <Action>
          <svg width="42" height="42" viewBox="0 0 42 42" fill="none" stroke="#f2f2f2" strokeWidth="2">
            <path d="M7 1H35Q39 1 39 5V32L30 41H7Q3 41 3 37V5Q3 1 7 1Z" />
            <path d="M8 11H34M8 16.500H34M8 22H34M8 27.500H26" />
          </svg>
          下单
        </Action>
        <Action>
          <svg width="44" height="42" viewBox="0 0 44 42" fill="none" stroke="#f2f2f2" strokeWidth="2">
            <path d="M13 3H31M22 15V30M14.500 22.500H29.500M5 40H12M32 40H39" />
            <rect x="1" y="7" width="42" height="31" rx="4" />
          </svg>
          诊股
        </Action>
        <Action>
          <svg width="42" height="42" viewBox="0 0 42 42" fill="none" stroke="#f2f2f2" strokeWidth="2">
            <rect x="3" y="3" width="36" height="36" /><path d="M11 21H31" />
          </svg>
          删自选
        </Action>
        <Action>
          <svg width="42" height="42" viewBox="0 0 42 42" fill="none" stroke="#f2f2f2" strokeWidth="2">
            <circle cx="21" cy="21" r="18.500" /><path d="M12.500 15.500H29.500M12.500 26H29.500" />
          </svg>
          功能
        </Action>
        <Watermark>
          <svg width="28" height="28" viewBox="0 0 28 28" fill="none" stroke="#dcdcdc" strokeWidth="2.400">
            <path d="M17 1.800A12.500 12.500 0 1 0 17 26.200M21 4A12.500 12.500 0 0 1 23 23" />
            <path d="M7 8q9 6 0 13M24 7q-8 0-8 6t5 11" />
          </svg>
          雪球 · 蕾蕾宝贝儿0621
        </Watermark>
      </BottomBar>
    </Page>
  );
}
